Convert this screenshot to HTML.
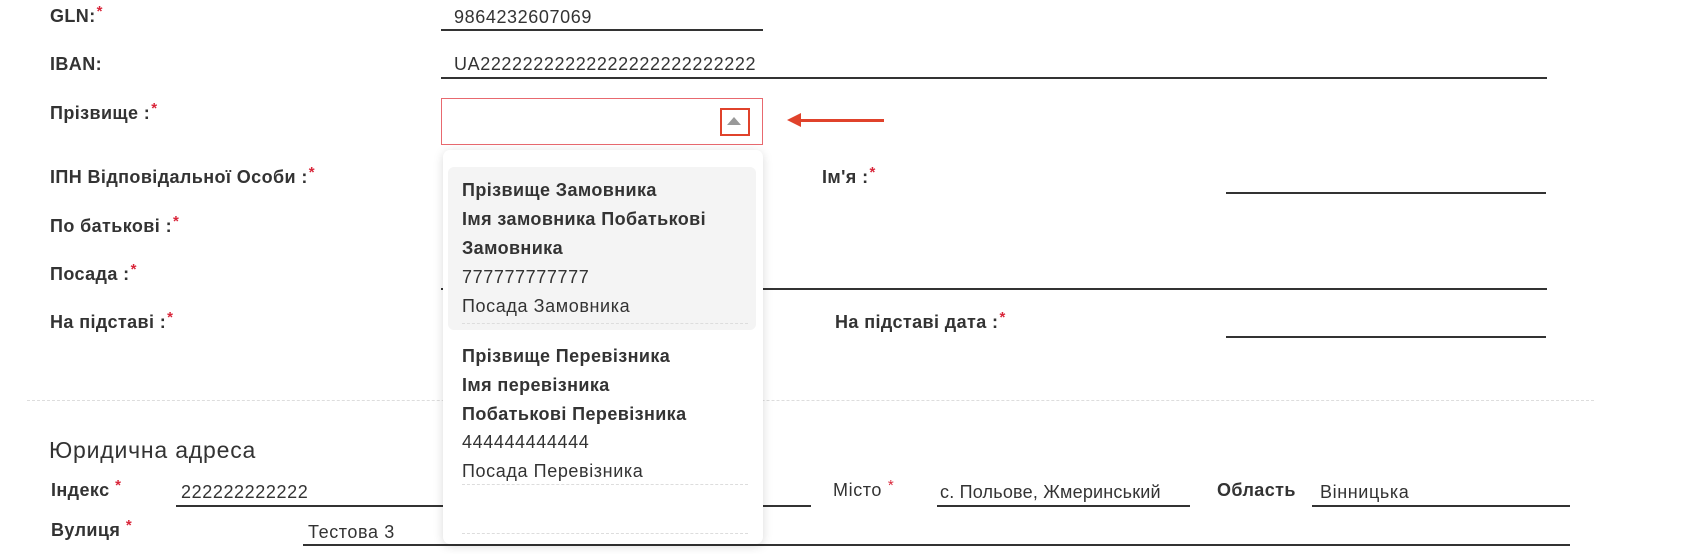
<!DOCTYPE html>
<html><head><meta charset="utf-8"><style>
body{margin:0;width:1696px;height:554px;background:#fff;position:relative;overflow:hidden;font-family:"Liberation Sans","DejaVu Sans",sans-serif;color:#333;}
.a{position:absolute;white-space:nowrap;line-height:24px;}
.b{font-weight:bold;font-size:18px;letter-spacing:0.4px;}
.v{font-size:18px;letter-spacing:0.6px;}
.s{color:#d9263a;font-size:15px;position:relative;top:-6px;margin-left:1px;}
.l{position:absolute;height:2px;background:#333;}
</style></head><body>

<div class="a b" style="left:50px;top:4px">GLN:<span class="s">*</span></div>
<div class="a v" style="left:454px;top:5px">9864232607069</div>
<div class="l" style="left:441px;top:29px;width:322px"></div>

<div class="a b" style="left:50px;top:52px">IBAN:</div>
<div class="a v" style="left:454px;top:52px">UA22222222222222222222222222</div>
<div class="l" style="left:441px;top:77px;width:1106px"></div>

<div class="a b" style="left:50px;top:101px">Прізвище :<span class="s">*</span></div>
<div style="position:absolute;left:441px;top:98px;width:320px;height:45px;border:1px solid #e8696f;"></div>
<div style="position:absolute;left:720px;top:108px;width:26px;height:24px;border:2px solid #e0422b;"></div>
<div style="position:absolute;left:727px;top:117px;width:0;height:0;border-left:7px solid transparent;border-right:7px solid transparent;border-bottom:8px solid #999;"></div>
<div style="position:absolute;left:800px;top:119px;width:84px;height:3px;background:#e0422b;"></div>
<div style="position:absolute;left:787px;top:113px;width:0;height:0;border-top:7px solid transparent;border-bottom:7px solid transparent;border-right:14px solid #e0422b;"></div>

<div class="a b" style="left:50px;top:165px">ІПН Відповідальної Особи :<span class="s">*</span></div>
<div class="a b" style="left:822px;top:165px">Ім'я :<span class="s">*</span></div>
<div class="l" style="left:1226px;top:192px;width:320px"></div>

<div class="a b" style="left:50px;top:214px">По батькові :<span class="s">*</span></div>
<div class="a b" style="left:50px;top:262px">Посада :<span class="s">*</span></div>
<div class="l" style="left:441px;top:288px;width:1106px"></div>

<div class="a b" style="left:50px;top:310px">На підставі :<span class="s">*</span></div>
<div class="a b" style="left:835px;top:310px">На підставі дата :<span class="s">*</span></div>
<div class="l" style="left:1226px;top:336px;width:320px"></div>

<div style="position:absolute;left:27px;top:400px;width:1567px;border-top:1px dashed #ddd;"></div>

<div class="a" style="left:49px;top:438px;font-size:23px;letter-spacing:0.8px;">Юридична адреса</div>
<div class="a b" style="left:51px;top:478px;">Індекс<span class="s"> *</span></div>
<div class="a v" style="left:181px;top:480px">222222222222</div>
<div class="l" style="left:176px;top:505px;width:635px"></div>
<div class="a v" style="left:833px;top:478px">Місто<span class="s"> *</span></div>
<div class="a v" style="left:940px;top:480px;letter-spacing:0.2px">с. Польове, Жмеринський</div>
<div class="l" style="left:937px;top:505px;width:253px"></div>
<div class="a b" style="left:1217px;top:478px">Область</div>
<div class="a v" style="left:1320px;top:480px">Вінницька</div>
<div class="l" style="left:1312px;top:505px;width:258px"></div>

<div class="a b" style="left:51px;top:518px">Вулиця<span class="s"> *</span></div>
<div class="a v" style="left:308px;top:520px">Тестова 3</div>
<div class="l" style="left:303px;top:544px;width:1267px"></div>

<div style="position:absolute;left:443px;top:150px;width:320px;height:394px;background:#fff;border-radius:7px;box-shadow:0 2px 10px rgba(0,0,0,0.15);">
  <div style="position:absolute;left:5px;top:17px;width:308px;height:163px;background:#f4f4f4;border-radius:6px;"></div>
  <div class="a b" style="left:19px;top:26px;line-height:29px;">Прізвище Замовника<br>Імя замовника Побатькові<br>Замовника</div>
  <div class="a v" style="left:19px;top:113px;line-height:29px;">777777777777<br>Посада Замовника</div>
  <div style="position:absolute;left:19px;top:173px;width:286px;border-top:1px dashed #ddd;"></div>
  <div class="a b" style="left:19px;top:192px;line-height:29px;">Прізвище Перевізника<br>Імя перевізника<br>Побатькові Перевізника</div>
  <div class="a v" style="left:19px;top:278px;line-height:29px;">444444444444<br>Посада Перевізника</div>
  <div style="position:absolute;left:19px;top:334px;width:286px;border-top:1px dashed #ddd;"></div>
  <div style="position:absolute;left:19px;top:383px;width:286px;border-top:1px dashed #ddd;"></div>
</div>
</body></html>
